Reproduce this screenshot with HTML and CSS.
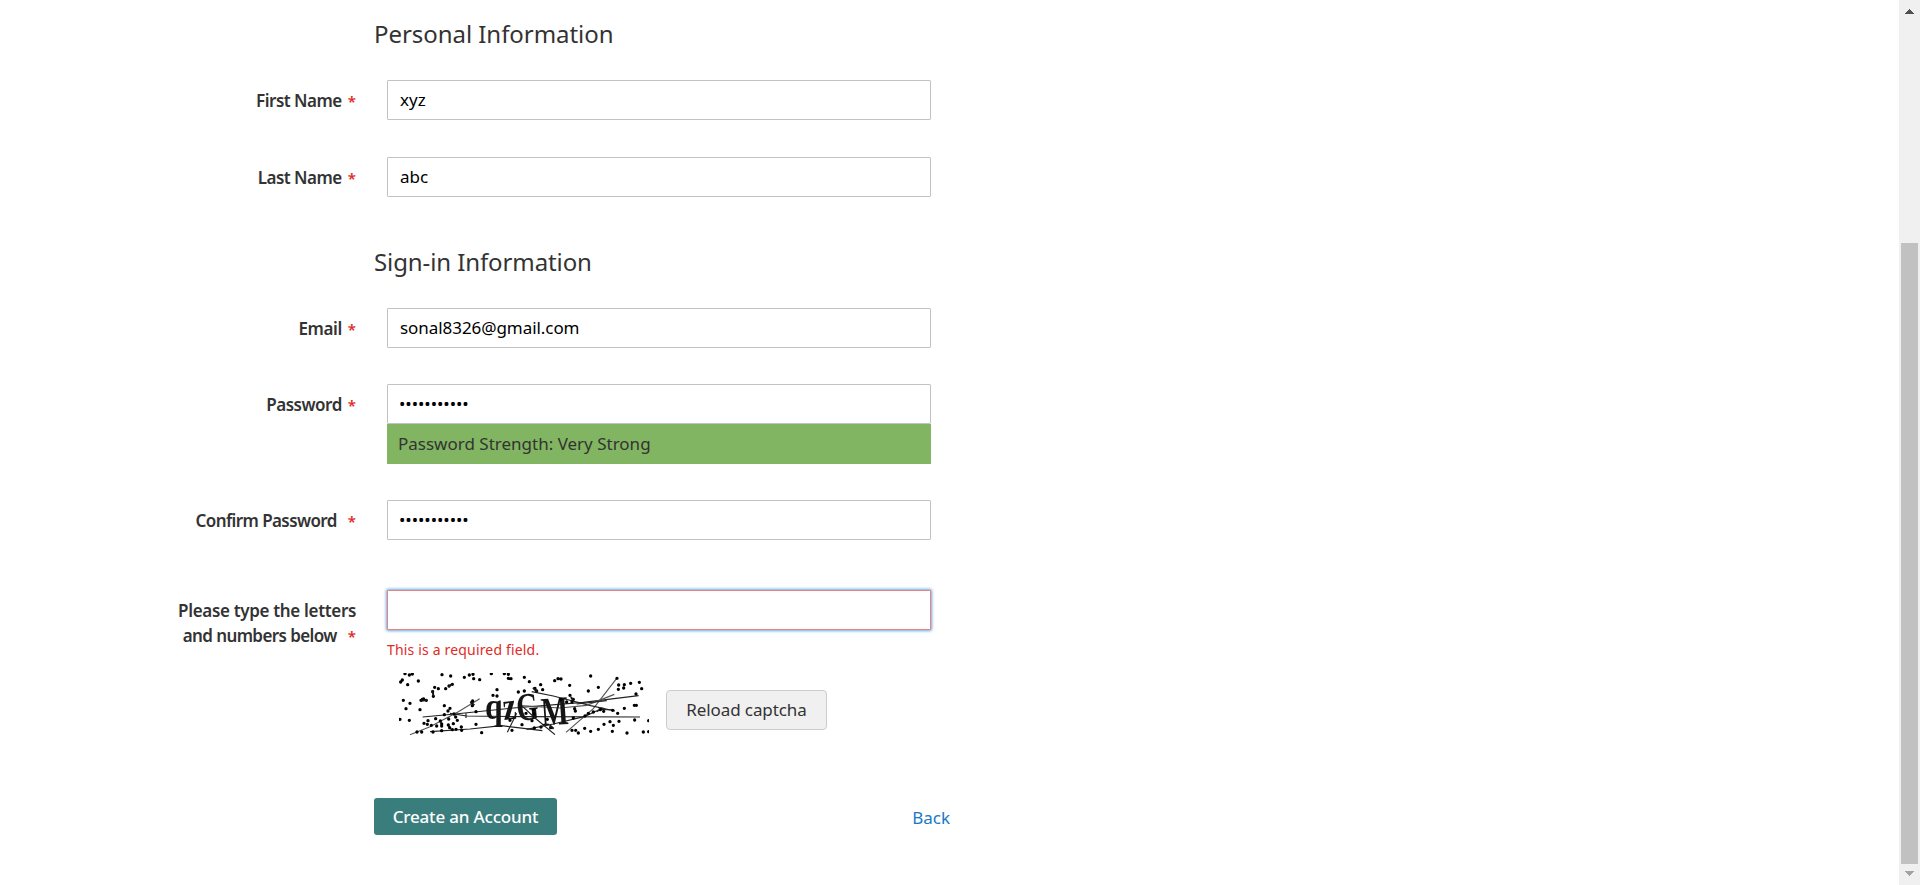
FILE: index.html
```html
<!DOCTYPE html>
<html lang="en">
<head>
<meta charset="utf-8">
<title>Create an Account</title>
<link rel="stylesheet" href="styles.css">
</head>
<body>
<div class="window">
<form class="page">
  <h2 class="heading"><span class="heading-personal">Personal Information</span></h2>
  <div class="row first-row"><label class="label"><span class="l-first">First Name</span><b class="star">*</b></label><input class="input t-xyz" type="text" value="xyz"></div>
  <div class="row"><label class="label"><span class="l-last">Last Name</span><b class="star">*</b></label><input class="input t-abc" type="text" value="abc"></div>
  <h2 class="heading heading-second"><span class="heading-signin">Sign-in Information</span></h2>
  <div class="row first-row"><label class="label"><span class="l-email">Email</span><b class="star">*</b></label><input class="input t-email" type="text" value="sonal8326@gmail.com"></div>
  <div class="row tight-row"><label class="label"><span class="l-pass">Password</span><b class="star">*</b></label>
    <div class="field"><input class="input dots" type="password" value="abcdefghijk"><div class="strength"><span>Password Strength: Very Strong</span></div></div></div>
  <div class="row tight-row"><label class="label"><span class="l-confirm">Confirm Password</span><b class="star star-wide">*</b></label><input class="input dots" type="password" value="abcdefghijk"></div>
  <div class="row captcha-row">
    <label class="label label-two"><span class="l-type">Please type the letters</span><br><span class="l-numbers">and numbers below</span><b class="star star-wide">*</b></label>
    <div class="field">
      <input class="input invalid" type="text">
      <div class="error"><span>This is a required field.</span></div>
      <div class="captcha">
        <svg class="captcha-image" viewBox="57 39 750 186" width="250" height="62">
          <g fill="none" stroke="#222" stroke-width="3.5">
            <path d="M128 171L225 162 400 144 610 127 776 107"/>
            <path d="M210 160L260 168 430 170 780 171"/>
            <path d="M150 215L270 207 365 197 487 212"/>
            <path d="M90 224L150 200 235 155 299 116" stroke="#555"/>
            <path d="M558 217L640 146 710 55" stroke="#555"/>
            <path d="M382 217L410 160"/><path d="M418 130L465 174 525 224"/>
            <path d="M455 95L520 108 632 137 705 153"/>
            <path d="M420 137L540 144 620 136 703 103" stroke="#555"/>
            <path d="M440 208L520 192 615 169 660 148 703 150"/>
            <path d="M590 132L680 122M258 160v14M650 155l18-10-14-2"/>
          </g>
          <g class="captcha-text">
            <text x="315" y="178" font-size="112" textLength="53" lengthAdjust="spacingAndGlyphs">q</text>
            <text x="369" y="178" font-size="118" textLength="40" lengthAdjust="spacingAndGlyphs" transform="rotate(-6 388 150)">z</text>
            <text x="409" y="180" font-size="118" textLength="66" lengthAdjust="spacingAndGlyphs" transform="rotate(-6 440 140)">G</text>
            <text x="483" y="195" font-size="122" textLength="82" lengthAdjust="spacingAndGlyphs" transform="rotate(-4 520 155)">M</text>
          </g>
          <path class="specks" d="M62 66h0M67 60h0M75 41h0M88 45h0M97 42h0M83 74h0M115 63h0M186 44h0M212 48h0M253 52h0M268 45h0M279 43h0M281 56h0M299 59h0M334 41h0M373 41h0M385 43h0M385 55h0M393 56h0M433 52h0M448 65h0M217 73h0M207 78h0M197 86h0M175 86h0M164 82h0M158 95h0M160 109h0M351 89h0M339 106h0M351 108h0M415 96h0M433 93h0M465 85h0M482 74h0M470 93h0M488 89h0M524 62h0M534 56h0M543 57h0M569 76h0M632 48h0M625 93h0M655 82h0M711 55h0M716 75h0M733 74h0M715 88h0M731 84h0M752 70h0M778 67h0M785 86h0M768 102h0M70 121h0M90 130h0M78 146h0M123 121h0M131 117h0M139 121h0M127 118h0M193 137h0M204 153h0M210 145h0M276 126h0M277 137h0M278 123h0M288 155h0M120 149h0M60 178h0M88 181h0M167 176h0M193 164h0M206 177h0M181 183h0M132 190h0M142 193h0M144 182h0M154 196h0M185 192h0M170 198h0M185 198h0M205 195h0M209 203h0M220 191h0M232 181h0M228 208h0M244 201h0M245 211h0M217 209h0M288 193h0M305 218h0M159 216h0M111 216h0M125 216h0M185 212h0M222 162h0M227 171h0M390 181h0M396 211h0M426 194h0M456 182h0M463 204h0M483 201h0M512 203h0M502 178h0M460 149h0M438 160h0M462 162h0M543 119h0M560 126h0M570 106h0M580 118h0M576 126h0M584 146h0M586 153h0M580 174h0M615 168h0M625 160h0M640 156h0M661 149h0M671 154h0M698 151h0M713 160h0M733 145h0M763 136h0M769 136h0M690 185h0M717 184h0M764 180h0M700 196h0M672 193h0M655 208h0M614 205h0M587 211h0M576 211h0M595 219h0M632 214h0M697 214h0M741 219h0M790 216h0M806 182h0M806 215h0"/>
          <path class="clusters" d="M459 83l13 14M158 90l2 18M205 80l12-8M123 122l18-2M271 126l12 10M509 196l12 10M573 111l6 10"/>
        </svg>
        <button class="reload" type="button"><span>Reload captcha</span></button>
      </div>
    </div>
  </div>
  <div class="actions"><button class="create" type="button"><span>Create an Account</span></button><a class="back" href="#"><span>Back</span></a></div>
</form>
<div class="scrollbar">
  <svg class="arrow" width="9" height="5" shape-rendering="crispEdges"><path d="M0 5L4.500 0 9 5z" fill="#505050"/></svg>
  <div class="thumb"></div>
  <svg class="arrow" width="9" height="5" shape-rendering="crispEdges"><path d="M0 0L4.500 5 9 0z" fill="#a3a3a3"/></svg>
</div>
</div>
</body>
</html>
```
FILE: styles.css
```css
* { box-sizing: border-box; }
body { margin: 0; background: #fff; color: #333; font-family: "Noto Sans", "Open Sans", sans-serif; font-size: 17px; overflow: hidden; }
.window { display: flex; height: 885px; }
.page { flex: 1; height: 885px; overflow: hidden; }
.heading { margin: 0; padding: 16px 0 0 374px; height: 80px; font-size: 24px; line-height: 36px; font-weight: 400; white-space: nowrap; }
.heading-second { margin-top: 31px; }
.heading-personal { letter-spacing: -.05px; }
.heading-signin { letter-spacing: -.1px; }
.row { display: flex; gap: 31px; margin-top: 37px; white-space: nowrap; }
.first-row { margin-top: 0; }
.tight-row { margin-top: 36px; }
.label { width: 356px; text-align: right; font-weight: 600; line-height: 41px; }
.l-first, .l-last, .l-pass { letter-spacing: -.5px; }
.l-confirm, .l-numbers { letter-spacing: -.6px; }
.l-email { letter-spacing: -.4px; }
.l-type { letter-spacing: -.33px; }
.star { color: #e02b27; font-size: 15px; font-weight: 600; margin-left: 6px; }
.star-wide { margin-left: 11px; }
.field { width: 544px; }
.row > .label { height: 40px; }
.input { display: block; width: 544px; height: 40px; margin: 0; padding: 0 11px 1px 12px; border: 1px solid #c2c2c2; border-radius: 1px; background: #fff; color: #000; font: 400 17px "Noto Sans", sans-serif; outline: 0; }
.t-email { letter-spacing: -.06px; }
.dots { padding-left: 11px; letter-spacing: -.06px; }
.strength { height: 40px; padding-left: 11px; background: #81b562; line-height: 39px; font-size: 17px; font-weight: 400; letter-spacing: 0; }
.captcha-row { margin-top: 50px; }
.label-two { line-height: 25px; padding-top: 8px; }
.invalid { border-color: #ed8380; box-shadow: 0 0 3px 1px #68a8e0; }
.error { height: 43px; padding-top: 8px; color: #e02b27; font-size: 14px; line-height: 24px; letter-spacing: .17px; }
.captcha { display: flex; padding-left: 12px; gap: 17px; }
.captcha-image { display: block; filter: blur(.25px); }
.captcha-text { fill: #151515; font-family: "Liberation Serif", serif; font-weight: 700; }
.specks { fill: none; stroke: #000; stroke-width: 10; stroke-linecap: round; }
.clusters { fill: none; stroke: #151515; stroke-width: 6; }
.reload { width: 161px; height: 40px; margin: 17px 0 0; padding: 0 0 2px; border: 1px solid #ccc; border-radius: 4px; background: #f0f0f0; color: #333; font: 400 17px "Noto Sans", sans-serif; letter-spacing: -.1px; white-space: nowrap; }
.actions { display: flex; justify-content: space-between; width: 950px; padding-left: 374px; margin-top: 63px; }
.create { width: 183px; height: 37px; padding: 0 0 1px; border: 0; border-radius: 3px; background: #397e7d; color: #fff; font: 500 17px "Noto Sans", sans-serif; letter-spacing: -.18px; white-space: nowrap; }
.back { color: #1979c3; text-decoration: none; line-height: 39px; height: 37px; white-space: nowrap; }
.scrollbar { display: flex; flex-direction: column; align-items: center; width: 21px; height: 885px; background: #f0f0f0; }
.arrow { display: block; margin-top: 9px; }
.thumb { width: 17px; height: 621px; margin-top: 229px; background: #c1c1c1; }
.thumb + .arrow { margin-top: 7px; }
```
